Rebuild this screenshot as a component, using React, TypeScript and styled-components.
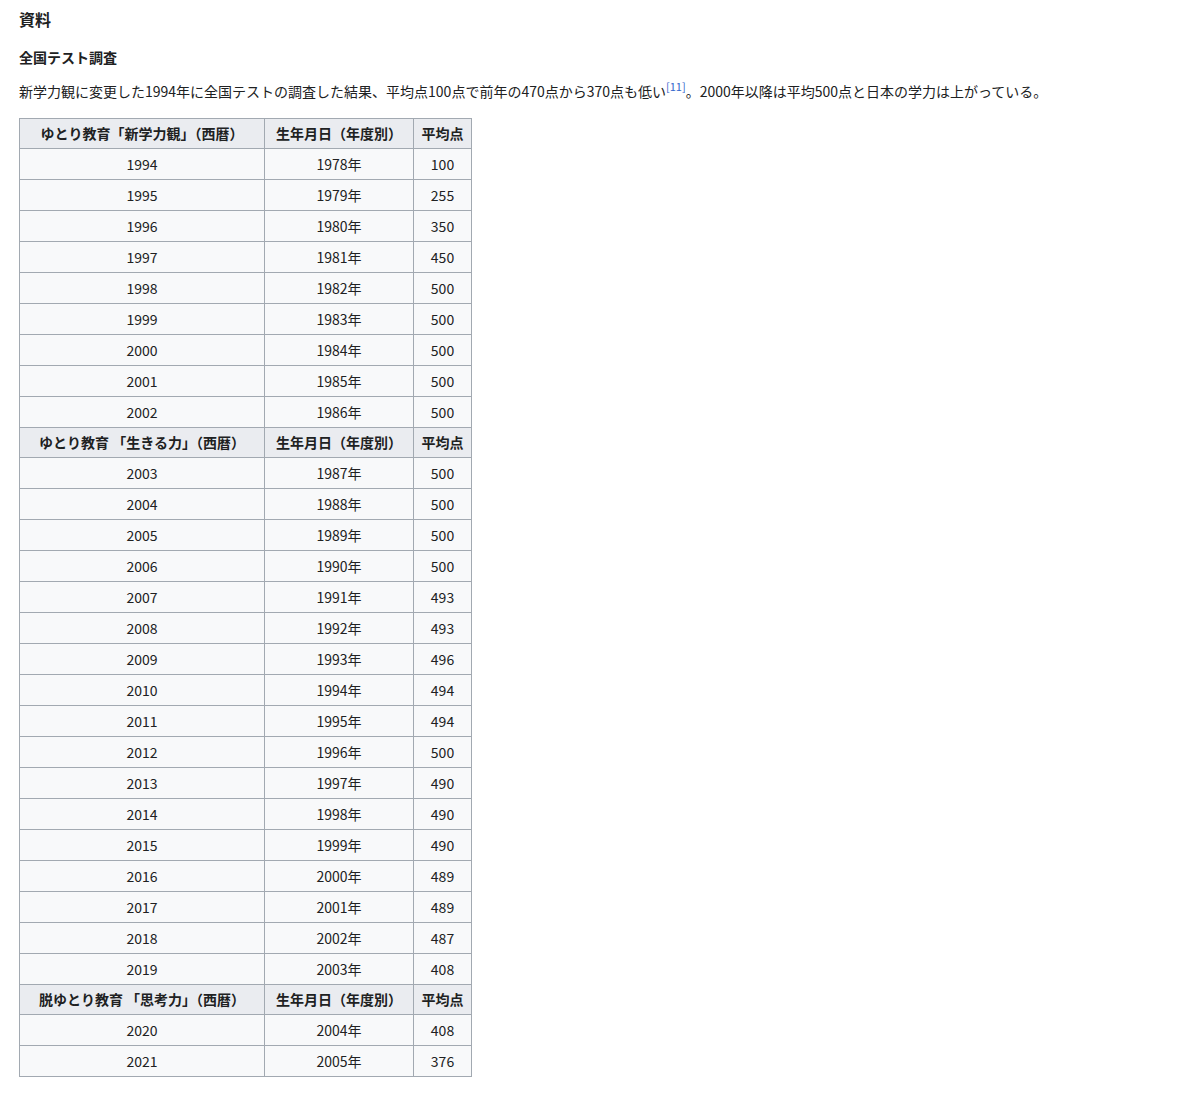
import React from "react";
import styled, { createGlobalStyle } from "styled-components";

const Global = createGlobalStyle`
  body { margin: 0; background: #fff; font-family: "Noto Sans CJK JP", "Noto Sans", sans-serif; color: #202122; }
`;
const Page = styled.div`padding: 6px 19px;`;
const H2 = styled.div`font-size: 16px; font-weight: bold; line-height: 26px;`;
const H3 = styled.div`font-size: 14px; font-weight: bold; margin-top: 14px; line-height: 22px;`;
const P = styled.p`font-size: 14px; margin: 7px 0 16px; line-height: 22px; white-space: nowrap;`;
const Sup = styled.sup`font-size: 11px; color: #3366cc;`;
const Table = styled.table`border-collapse: collapse; background: #f8f9fa; font-size: 14px;
  border: 1px solid #a2a9b1; table-layout: fixed;`;
const Th = styled.th<{ w?: number }>`background: #eaecf0; border: 1px solid #a2a9b1; height: 30px; padding: 0 6px;
  font-weight: bold; white-space: nowrap; ${p => p.w ? `width:${p.w}px;` : ""} box-sizing: border-box;`;
const Td = styled.td`border: 1px solid #a2a9b1; height: 30px; text-align: center; padding: 0 6px;`;

const groups: [string, [number, number, number][]][] = [
  ["ゆとり教育「新学力観」（西暦）", [[1994,1978,100],[1995,1979,255],[1996,1980,350],[1997,1981,450],[1998,1982,500],[1999,1983,500],[2000,1984,500],[2001,1985,500],[2002,1986,500]]],
  ["ゆとり教育 「生きる力」（西暦）", [[2003,1987,500],[2004,1988,500],[2005,1989,500],[2006,1990,500],[2007,1991,493],[2008,1992,493],[2009,1993,496],[2010,1994,494],[2011,1995,494],[2012,1996,500],[2013,1997,490],[2014,1998,490],[2015,1999,490],[2016,2000,489],[2017,2001,489],[2018,2002,487],[2019,2003,408]]],
  ["脱ゆとり教育 「思考力」（西暦）", [[2020,2004,408],[2021,2005,376]]],
];

export default function App() {
  return (
    <Page>
      <Global />
      <H2>資料</H2>
      <H3>全国テスト調査</H3>
      <P>新学力観に変更した1994年に全国テストの調査した結果、平均点100点で前年の470点から370点も低い<Sup>[11]</Sup>。2000年以降は平均500点と日本の学力は上がっている。</P>
      <Table>
        <tbody>
          {groups.map(([title, rows], gi) => (
            <React.Fragment key={gi}>
              <tr>
                <Th w={245}>{title}</Th>
                <Th w={149}>生年月日（年度別）</Th>
                <Th w={58}>平均点</Th>
              </tr>
              {rows.map(r => (
                <tr key={r[0]}><Td>{r[0]}</Td><Td>{r[1]}年</Td><Td>{r[2]}</Td></tr>
              ))}
            </React.Fragment>
          ))}
        </tbody>
      </Table>
    </Page>
  );
}
